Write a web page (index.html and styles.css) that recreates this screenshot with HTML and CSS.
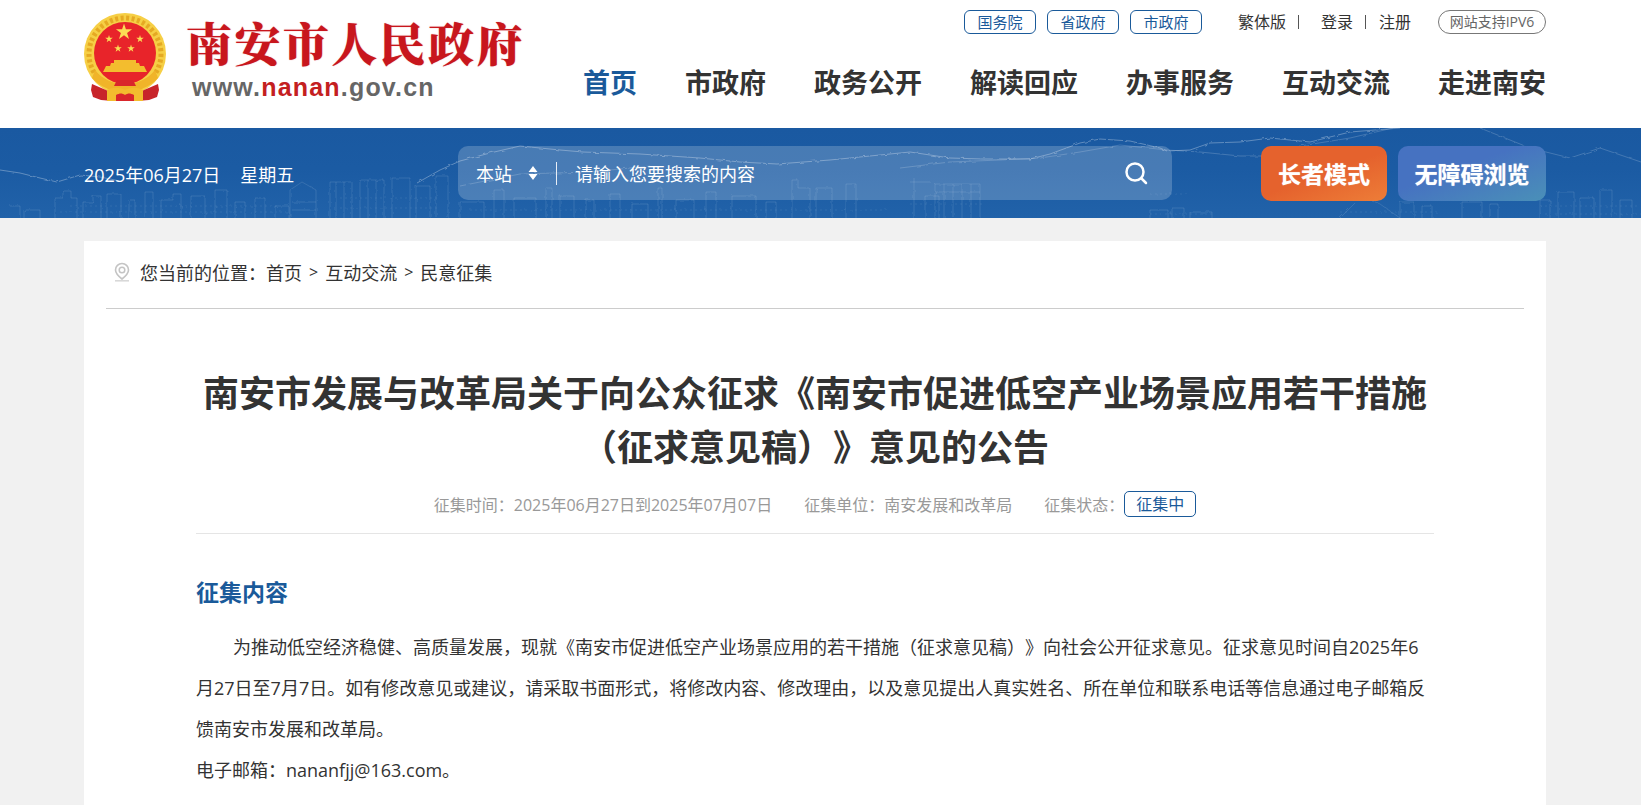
FILE: index.html
```html
<!DOCTYPE html>
<html lang="zh-CN">
<head>
<meta charset="utf-8">
<title>南安市人民政府</title>
<link rel="stylesheet" href="styles.css">
</head>
<body>
<header class="head">
  <div class="logo">
    <svg class="emblem" viewBox="0 0 82 88" width="82" height="88">
      <defs>
        <polygon id="st" points="0,-1 .225,-.309 .951,-.309 .363,.118 .588,.809 0,.382 -.588,.809 -.363,.118 -.951,-.309 -.225,-.309"/>
      </defs>
      <circle cx="41" cy="41" r="41" fill="#f6cf45"/>
      <circle cx="41" cy="41" r="36" fill="none" stroke="#e5a923" stroke-width="5" stroke-dasharray="3 2.500"/>
      <circle cx="41" cy="40" r="31" fill="#e8242a"/>
      <use href="#st" transform="translate(40 19) scale(8.500)" fill="#fbdc55"/>
      <use href="#st" transform="translate(25 26) scale(4)" fill="#fbdc55"/>
      <use href="#st" transform="translate(56 26) scale(4)" fill="#fbdc55"/>
      <use href="#st" transform="translate(34 35.500) scale(4)" fill="#fbdc55"/>
      <use href="#st" transform="translate(47 35.500) scale(4)" fill="#fbdc55"/>
      <path d="M30 47h22v3h3l1 3h4l3 6H19l3-6h4l1-3h3z" fill="#f3bd2e"/>
      <path d="M11 57c8 10 19 14 30 14s22-4 30-14l3 8c-7 8-20 14-33 14S15 73 8 65z" fill="#f0b429"/>
      <path d="M22 60h38l-6 5H28z" fill="#e8242a"/>
      <path d="M33 67h16l3 6H30z" fill="#d9262b"/>
      <path d="M8 71l14 6 7 4v7l-12-1-8-3-2-7z" fill="#c8242a"/>
      <path d="M74 71l-14 6-7 4v7l12-1 8-3 2-7z" fill="#c8242a"/>
      <path d="M23 77c6-3 12-3 18 0 6-3 12-3 18 0v11H23z" fill="#f3bd2e"/>
      <path d="M32 82c4-2 6-2 9 0 3-2 5-2 9 0v6H32z" fill="#d9262b"/>
    </svg>
    <div class="logo-text">
      <div class="logo-title">南安市人民政府</div>
      <div class="logo-url">www.<span class="logo-red">nanan</span>.gov.cn</div>
    </div>
  </div>
  <div class="head-right">
    <div class="toplinks">
      <a class="pill">国务院</a>
      <a class="pill">省政府</a>
      <a class="pill">市政府</a>
      <span class="tl tl-first">繁体版</span><i class="bar"></i>
      <span class="tl tl-login">登录</span><i class="bar bar-wide"></i>
      <span class="tl">注册</span>
      <span class="ipv6">网站支持IPV6</span>
    </div>
    <nav class="nav">
      <a class="nav-on">首页</a>
      <a>市政府</a>
      <a>政务公开</a>
      <a>解读回应</a>
      <a>办事服务</a>
      <a>互动交流</a>
      <a>走进南安</a>
    </nav>
  </div>
</header>

<section class="band">
  <svg class="skyline" viewBox="0 0 1641 90" width="1641" height="90" aria-hidden="true">
    <defs>
      <filter id="wob" x="0" y="0" width="100%" height="100%">
        <feTurbulence type="fractalNoise" baseFrequency=".18" numOctaves="2" seed="4"/>
        <feDisplacementMap in="SourceGraphic" scale="3"/>
      </filter>
    </defs>
    <g filter="url(#wob)">
      <path class="sk1" d="M0 42L20 45 40 50 57 54 80 47 100 49 120 53M417 55L440 42 460 33 490 25 520 18 560 22 583 24 640 26 700 30 740 34 777 36 830 32 910 24 950 30 983 31 1030 31 1050 26 1080 15 1100 11 1130 13 1160 20 1167 23 1190 22 1210 15 1240 14 1270 10 1310 14 1350 4 1400 0"/>
      <path class="sk2" d="M900 40L950 34 1000 32 1040 30 1080 24 1120 17 1167 22 1200 24 1240 28 1270 28 1300 18 1350 10 1393 0M1480 0L1530 20 1570 30 1600 20 1641 34M460 58L520 46 590 44 650 38"/>
      <g class="sk3">
        <path d="M55 90V70h8v-7h8v7h6v20m6 0V74h10v-6h8v22m6 0V66h14v24m8 0V72h6v18m10 0V64h8v26m8 0V72h12v-6h8v24m10 0V68h14v22m10 0V62h12v28m8 0V74h10v16m10 0V70h10v20m10 0V78h14v12"/>
        <path d="M290 90V62l12-8 14 8v28m-24-16h24m-24 8h24M330 90V54h22v36m-16 0V54m8 0v36M360 90V52h24v38m-16 0V52m8 0v38M392 90V50h18v40m6 0V58h14v32m6 0V48h12v42"/>
        <path d="M10 78h10v12m4 0V82h16v8M460 90V74h24v16m10 0V62h10v28m10 0V70h22v20m10 0V60h6v30m8 0V68h14v22m12 0V72h8v18m16 0V66h10v24m12 0V76h16v14m10 0V60h4v30m14 0V72h18v18m12 0V64h10v26m16 0V68h24v22m10 0V74h10v16m16 0V52h6v8h12v30m6 0V60h16v30m14 0V56h10v34"/>
        <path d="M914 90V50m-4 4h20M925 90V68h14v22M935 90V56h45v34m-36 0V56m9 0v34m9 0V56m9 0v34M935 64h45"/>
        <path d="M1150 90V82h18v8m4 0V80h12v10m6 0V84h22v6M1340 90l22-22 18 8 20 14M1400 90V74h14v16m8 0V78h10v12M1462 90V74h20v16m8 0V76h8v14M1540 90V72h10v18m8 0V64h16v26m6 0V70h14v20m6 0V62h12v28m8 0V72h12v18"/>
      </g>
      <g class="sk5">
        <path d="M70 78H280M60 84H290M340 70H440M340 80H440M470 82H890M910 76H985M1150 66H1190M1150 86H1215M1340 84H1440M1540 78H1641M1540 86H1641"/>
      </g>
    </g>
  </svg>
  <div class="band-in">
    <div class="date"><span>2025年06月27日</span><span>星期五</span></div>
    <div class="search">
      <span class="scope">本站</span>
      <svg class="updown" viewBox="0 0 10 16" width="10" height="16"><path d="M5 1l4.500 6H.5zM5 15l4.500-6H.5z" fill="#fff"/></svg>
      <i class="sdiv"></i>
      <span class="ph">请输入您要搜索的内容</span>
      <svg class="sicon" viewBox="0 0 24 24" width="24" height="24"><circle cx="11" cy="11" r="8.500" fill="none" stroke="#fff" stroke-width="2.500"/><path d="M17.500 17.500l4.500 4.500" stroke="#fff" stroke-width="2.500" stroke-linecap="round"/></svg>
    </div>
    <a class="btn btn-old">长者模式</a>
    <a class="btn btn-acc">无障碍浏览</a>
  </div>
</section>

<main class="card">
  <div class="crumb">
    <svg class="pin" viewBox="0 0 18 20" width="18" height="20"><path d="M9 1.500a6.500 6.500 0 0 0-6.500 6.500c0 3.800 4.200 7.200 6.500 9 2.300-1.800 6.500-5.200 6.500-9A6.500 6.500 0 0 0 9 1.500z" fill="none" stroke="#c4c4c4" stroke-width="1.600"/><circle cx="9" cy="8" r="2.800" fill="none" stroke="#c4c4c4" stroke-width="1.500"/><path d="M2 18.800h14" stroke="#d6d6d6" stroke-width="1.500"/></svg>
    <span>您当前的位置：</span><span>首页</span><span class="gt">&gt;</span><span>互动交流</span><span class="gt">&gt;</span><span>民意征集</span>
  </div>
  <article class="article">
    <h1 class="title">南安市发展与改革局关于向公众征求《南安市促进低空产业场景应用若干措施<br>（征求意见稿）》意见的公告</h1>
    <div class="meta">
      <span>征集时间：2025年06月27日到2025年07月07日</span>
      <span>征集单位：南安发展和改革局</span>
      <span>征集状态：</span><span class="status">征集中</span>
    </div>
    <h2 class="sub">征集内容</h2>
    <p class="para">为推动低空经济稳健、高质量发展，现就《南安市促进低空产业场景应用的若干措施（征求意见稿）》向社会公开征求意见。征求意见时间自2025年6月27日至7月7日。如有修改意见或建议，请采取书面形式，将修改内容、修改理由，以及意见提出人真实姓名、所在单位和联系电话等信息通过电子邮箱反馈南安市发展和改革局。</p>
    <p class="para para-flat">电子邮箱：nananfjj@163.com。</p>
  </article>
</main>
</body>
</html>
```
FILE: styles.css
```css
* { box-sizing: border-box; }
html, body { margin: 0; height: 100%; overflow: hidden; }
body {
  background: #f1f1f1;
  color: #333;
  font-family: "Open Sans", "Noto Sans CJK SC", sans-serif;
  text-spacing-trim: space-all;
}
a { color: inherit; text-decoration: none; }

.head {
  position: relative;
  height: 128px;
  background: #fff;
  padding: 0 95px 0 84px;
  display: flex;
  justify-content: space-between;
}
.logo { display: flex; padding-top: 13px; width: 438px; flex: none; }
.emblem { flex: none; }
.logo-text { margin-left: 20px; }
.logo-title {
  font-family: "Noto Serif CJK SC", "Noto Sans CJK SC", sans-serif;
  font-size: 46px;
  line-height: 50px;
  margin-top: 3px;
  font-weight: 900;
  letter-spacing: 2.400px;
  color: #c8161d;
  white-space: nowrap;
  text-shadow: 0 0 1px rgba(200,22,29,.6);
}
.logo-url {
  font-family: "Liberation Sans", sans-serif;
  font-weight: 700;
  font-size: 25px;
  line-height: 30px;
  letter-spacing: 1.200px;
  margin: 6px 0 0 6px;
  color: #666;
}
.logo-red { color: #c4201f; }

.head-right { width: 963px; flex: none; }
.toplinks {
  display: flex;
  align-items: center;
  height: 24px;
  margin: 10px 0 0 381px;
  font-size: 16px;
  white-space: nowrap;
}
.pill {
  width: 72px;
  height: 24px;
  line-height: 22px;
  border: 1px solid #1a5a9a;
  border-radius: 6px;
  color: #1a5a9a;
  text-align: center;
  margin-right: 11px;
  font-size: 15px;
}
.tl { color: #333; font-size: 16px; line-height: 24px; }
.tl-first { margin-left: 25px; }
.bar { width: 1px; height: 14px; background: #555; margin: 0 12px; }
.bar-wide { margin-right: 13px; }
.bar + .tl-login { margin-left: 10px; }
.ipv6 {
  margin-left: auto;
  width: 108px;
  height: 24px;
  line-height: 22px;
  border: 1px solid #777;
  border-radius: 12px;
  color: #666;
  text-align: center;
  font-size: 14px;
}
.nav {
  display: flex;
  justify-content: space-between;
  margin-top: 29px;
  font-size: 27px;
  line-height: 40px;
  font-weight: 700;
  color: #333;
  white-space: nowrap;
}
.nav-on { color: #1a5a9a; }

.band {
  position: relative;
  height: 90px;
  overflow: hidden;
  background: linear-gradient(180deg, #1a59a1 0%, #1b5ba3 45%, #2162a9 100%);
}
.skyline { position: absolute; left: 0; top: 0; }
.sk1 { fill: none; stroke: rgba(255,255,255,.3); stroke-width: 1; }
.sk2 { fill: none; stroke: rgba(255,255,255,.18); stroke-width: 1; }
.sk3 { fill: none; stroke: rgba(255,255,255,.11); stroke-width: 1; }
.sk5 { fill: none; stroke: rgba(255,255,255,.07); stroke-width: 1; stroke-dasharray: 2 3; }
.band-in {
  position: relative;
  display: flex;
  align-items: flex-start;
  padding: 18px 95px 0 84px;
  height: 100%;
  color: #fff;
}
.date {
  width: 374px;
  padding-top: 2px;
  display: flex;
  gap: 20px;
  font-size: 18px;
  line-height: 54px;
  white-space: nowrap;
}
.search {
  width: 714px;
  height: 54px;
  border-radius: 10px;
  background: rgba(255,255,255,.2);
  display: flex;
  align-items: center;
  padding: 0 24px 0 18px;
  font-size: 18px;
}
.scope { width: 52px; }
.updown { flex: none; }
.sdiv { width: 1px; height: 23px; background: #e8eef6; margin: 0 18px 0 18px; }
.ph { flex: 1; }
.btn {
  height: 55px;
  border-radius: 10px;
  font-size: 23px;
  line-height: 57px;
  font-weight: 700;
  text-align: center;
  color: #fff;
  white-space: nowrap;
  text-shadow: 0 0 1px rgba(255,255,255,.6);
}
.btn-old {
  width: 126px;
  margin-left: 89px;
  background: linear-gradient(160deg, #e5622d 50%, #ed7d38);
}
.btn-acc {
  width: 148px;
  margin-left: 11px;
  background: linear-gradient(160deg, #4672c1 40%, #4a90b8);
}

.card {
  width: 1462px;
  margin: 23px 0 0 84px;
  background: #fff;
  padding: 0 22px;
  height: 600px;
}
.crumb {
  height: 68px;
  border-bottom: 1px solid #ccc;
  display: flex;
  align-items: center;
  padding: 0 0 5px 7px;
  font-size: 18px;
  white-space: nowrap;
}
.pin { flex: none; margin-right: 9px; }
.gt { margin: 0 7px; font-size: 16px; }
.article { padding: 0 90px; }
.title {
  margin: 58px 0 0;
  font-size: 36px;
  line-height: 54px;
  font-weight: 700;
  text-align: center;
  color: #333;
}
.meta {
  margin-top: 14px;
  height: 45px;
  border-bottom: 1px solid #e5e5e5;
  padding: 3px 0 0 0;
  display: flex;
  justify-content: center;
  align-items: flex-start;
  font-size: 16px;
  line-height: 26px;
  color: #999;
  white-space: nowrap;
}
.meta span + span { margin-left: 32px; }
.meta .status {
  margin: -1px 0 0;
  width: 72px;
  height: 26px;
  line-height: 24px;
  border: 1px solid #1a5a9a;
  border-radius: 5px;
  color: #1a5a9a;
  text-align: center;
}
.sub {
  margin: 42px 0 0;
  font-size: 23px;
  line-height: 32px;
  font-weight: 700;
  color: #1a5a9a;
}
.para {
  margin: 19px 0 0;
  font-size: 18px;
  line-height: 41px;
  text-indent: 37px;
  color: #333;
}
.para-flat { margin-top: 0; text-indent: 0; }
```
